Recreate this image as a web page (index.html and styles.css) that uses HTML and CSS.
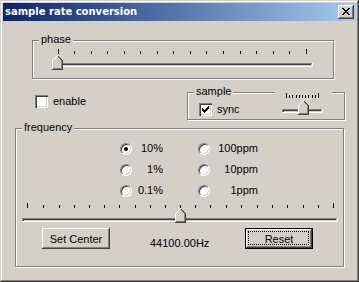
FILE: index.html
```html
<!DOCTYPE html>
<html>
<head>
<meta charset="utf-8">
<link rel="stylesheet" href="styles.css">
</head>
<body>
<div class="window">
  <div class="titlebar">
    <span class="title">sample rate conversion</span>
    <span class="close">
      <svg width="16" height="14" viewBox="0 0 16 14" shape-rendering="crispEdges" fill="#000">
        <rect x="4" y="3" width="2" height="1"/><rect x="10" y="3" width="2" height="1"/>
        <rect x="5" y="4" width="2" height="1"/><rect x="9" y="4" width="2" height="1"/>
        <rect x="6" y="5" width="4" height="1"/>
        <rect x="7" y="6" width="2" height="1"/>
        <rect x="6" y="7" width="4" height="1"/>
        <rect x="5" y="8" width="2" height="1"/><rect x="9" y="8" width="2" height="1"/>
        <rect x="4" y="9" width="2" height="1"/><rect x="10" y="9" width="2" height="1"/>
      </svg>
    </span>
  </div>
  <div class="content">
    <div class="group phase">
      <span class="legend">phase</span>
      <svg class="slider-phase" width="300" height="24" viewBox="0 0 300 24" shape-rendering="crispEdges">
        <defs>
          <g id="thumb">
            <g fill="#d4d0c8">
              <rect x="5" y="1" width="1" height="1"/>
              <rect x="4" y="2" width="3" height="1"/>
              <rect x="3" y="3" width="5" height="1"/>
              <rect x="2" y="4" width="7" height="1"/>
              <rect x="1" y="5" width="9" height="9"/>
            </g>
            <g fill="#fff">
              <rect x="0" y="5" width="1" height="9"/>
              <rect x="1" y="4" width="1" height="1"/>
              <rect x="2" y="3" width="1" height="1"/>
              <rect x="3" y="2" width="1" height="1"/>
              <rect x="4" y="1" width="1" height="1"/>
              <rect x="5" y="0" width="1" height="1"/>
            </g>
            <g fill="#808080">
              <rect x="9" y="5" width="1" height="9"/>
              <rect x="6" y="2" width="1" height="1"/>
              <rect x="7" y="3" width="1" height="1"/>
              <rect x="8" y="4" width="1" height="1"/>
              <rect x="1" y="13" width="8" height="1"/>
            </g>
            <g fill="#404040">
              <rect x="10" y="5" width="1" height="10"/>
              <rect x="6" y="1" width="1" height="1"/>
              <rect x="7" y="2" width="1" height="1"/>
              <rect x="8" y="3" width="1" height="1"/>
              <rect x="9" y="4" width="1" height="1"/>
              <rect x="0" y="14" width="10" height="1"/>
            </g>
          </g>
        </defs>
        <g fill="#000">
          <rect x="25" y="2" width="1" height="5"/>
          <rect x="41" y="4" width="1" height="3"/>
          <rect x="58" y="4" width="1" height="3"/>
          <rect x="74" y="4" width="1" height="3"/>
          <rect x="91" y="4" width="1" height="3"/>
          <rect x="107" y="4" width="1" height="3"/>
          <rect x="124" y="4" width="1" height="3"/>
          <rect x="140" y="4" width="1" height="3"/>
          <rect x="157" y="4" width="1" height="3"/>
          <rect x="173" y="4" width="1" height="3"/>
          <rect x="190" y="4" width="1" height="3"/>
          <rect x="207" y="4" width="1" height="3"/>
          <rect x="223" y="4" width="1" height="3"/>
          <rect x="240" y="4" width="1" height="3"/>
          <rect x="256" y="4" width="1" height="3"/>
          <rect x="273" y="2" width="1" height="5"/>
        </g>
        <rect x="19" y="16" width="260" height="1" fill="#808080"/>
        <rect x="19" y="16" width="1" height="3" fill="#808080"/>
        <rect x="20" y="17" width="258" height="1" fill="#404040"/>
        <rect x="20" y="17" width="1" height="2" fill="#404040"/>
        <rect x="19" y="19" width="261" height="1" fill="#fff"/>
        <rect x="279" y="16" width="1" height="4" fill="#fff"/>
        <use href="#thumb" transform="translate(19,8)"/>
      </svg>
    </div>

    <div class="row2">
      <div class="check enable"><span class="box"></span><span>enable</span></div>
      <div class="group sample">
        <span class="legend">sample</span>
        <div class="check"><span class="box">
          <svg width="13" height="13" viewBox="0 0 13 13" shape-rendering="crispEdges" fill="#000">
            <g transform="translate(3,3)">
              <rect x="6" y="0" width="1" height="1"/>
              <rect x="5" y="1" width="2" height="1"/>
              <rect x="0" y="2" width="1" height="1"/><rect x="4" y="2" width="3" height="1"/>
              <rect x="0" y="3" width="2" height="1"/><rect x="3" y="3" width="3" height="1"/>
              <rect x="0" y="4" width="5" height="1"/>
              <rect x="1" y="5" width="3" height="1"/>
              <rect x="2" y="6" width="1" height="1"/>
            </g>
          </svg>
        </span><span>sync</span></div>
        <svg class="mini-slider" width="58" height="28" viewBox="0 0 58 28" shape-rendering="crispEdges">
          <rect x="0" y="0" width="58" height="28" fill="#d4d0c8"/>
          <g fill="#000">
            <rect x="12" y="5" width="1" height="5"/>
            <rect x="15" y="7" width="1" height="3"/>
            <rect x="18" y="7" width="1" height="3"/>
            <rect x="22" y="7" width="1" height="3"/>
            <rect x="25" y="7" width="1" height="3"/>
            <rect x="28" y="7" width="1" height="3"/>
            <rect x="31" y="7" width="1" height="3"/>
            <rect x="34" y="7" width="1" height="3"/>
            <rect x="38" y="7" width="1" height="3"/>
            <rect x="41" y="7" width="1" height="3"/>
            <rect x="44" y="5" width="1" height="5"/>
          </g>
          <rect x="8" y="21" width="40" height="1" fill="#808080"/>
          <rect x="8" y="21" width="1" height="3" fill="#808080"/>
          <rect x="9" y="22" width="38" height="1" fill="#404040"/>
          <rect x="9" y="22" width="1" height="2" fill="#404040"/>
          <rect x="8" y="24" width="41" height="1" fill="#fff"/>
          <rect x="48" y="21" width="1" height="4" fill="#fff"/>
          <use href="#thumb" transform="translate(24,12)"/>
        </svg>
      </div>
    </div>

    <div class="group freq">
      <span class="legend">frequency</span>
      <div class="radios">
        <div class="radio-item"><span class="radio on"></span><span class="rl">10%</span></div>
        <div class="radio-item"><span class="radio"></span><span class="rl">100ppm</span></div>
        <div class="radio-item"><span class="radio"></span><span class="rl">1%</span></div>
        <div class="radio-item"><span class="radio"></span><span class="rl">10ppm</span></div>
        <div class="radio-item"><span class="radio"></span><span class="rl">0.1%</span></div>
        <div class="radio-item"><span class="radio"></span><span class="rl">1ppm</span></div>
      </div>
      <svg class="main-slider" width="327" height="25" viewBox="0 0 327 25" shape-rendering="crispEdges">
        <g fill="#000">
          <rect x="11" y="2" width="1" height="5"/>
          <rect x="27" y="4" width="1" height="3"/>
          <rect x="43" y="4" width="1" height="3"/>
          <rect x="58" y="4" width="1" height="3"/>
          <rect x="73" y="4" width="1" height="3"/>
          <rect x="88" y="4" width="1" height="3"/>
          <rect x="103" y="4" width="1" height="3"/>
          <rect x="119" y="4" width="1" height="3"/>
          <rect x="134" y="4" width="1" height="3"/>
          <rect x="149" y="4" width="1" height="3"/>
          <rect x="164" y="4" width="1" height="3"/>
          <rect x="179" y="4" width="1" height="3"/>
          <rect x="194" y="4" width="1" height="3"/>
          <rect x="210" y="4" width="1" height="3"/>
          <rect x="225" y="4" width="1" height="3"/>
          <rect x="241" y="4" width="1" height="3"/>
          <rect x="256" y="4" width="1" height="3"/>
          <rect x="271" y="4" width="1" height="3"/>
          <rect x="287" y="4" width="1" height="3"/>
          <rect x="302" y="4" width="1" height="3"/>
          <rect x="317" y="2" width="1" height="5"/>
        </g>
        <rect x="6" y="17" width="315" height="1" fill="#808080"/>
        <rect x="6" y="17" width="1" height="3" fill="#808080"/>
        <rect x="7" y="18" width="313" height="1" fill="#404040"/>
        <rect x="7" y="18" width="1" height="2" fill="#404040"/>
        <rect x="6" y="20" width="316" height="1" fill="#fff"/>
        <rect x="321" y="17" width="1" height="4" fill="#fff"/>
        <use href="#thumb" transform="translate(159,7)"/>
      </svg>
      <div class="buttons">
        <div class="btn">Set Center</div>
        <div class="hz">44100.00Hz</div>
        <div class="btn default">Reset</div>
      </div>
    </div>
  </div>
</div>
</body>
</html>
```

FILE: styles.css
```css
* { box-sizing: border-box; }
html, body { margin: 0; padding: 0; }
body {
  width: 359px;
  height: 282px;
  overflow: hidden;
  background: #d4d0c8;
  font-family: "Liberation Sans", Arial, sans-serif;
  font-size: 11px;
  color: #000;
}
.window {
  width: 359px;
  height: 282px;
  padding: 3px;
  background: #d4d0c8;
  box-shadow: inset -1px -1px 0 #404040, inset 1px 1px 0 #d4d0c8, inset -2px -2px 0 #808080, inset 2px 2px 0 #fff;
}
.titlebar {
  height: 18px;
  display: flex;
  align-items: center;
  justify-content: space-between;
  padding: 0 2px;
  background: linear-gradient(to right, #0a246a, #a6caf0);
}
.title {
  font-family: "DejaVu Sans", sans-serif;
  font-weight: bold;
  font-size: 10px;
  line-height: 18px;
  color: #fff;
}
.close {
  display: block;
  width: 16px;
  height: 14px;
  background: #d4d0c8;
  box-shadow: inset -1px -1px 0 #404040, inset 1px 1px 0 #fff, inset -2px -2px 0 #808080;
}
.close svg { display: block; }
.content { display: flex; flex-direction: column; }
.group {
  position: relative;
  border: 1px solid #808080;
  box-shadow: inset 1px 1px 0 #fff, 1px 1px 0 #fff;
}
.legend {
  position: absolute;
  top: -8px;
  left: 6px;
  padding: 0 2px;
  background: #d4d0c8;
  line-height: 13px;
  white-space: nowrap;
}
.phase {
  margin: 19px 0 0 29px;
  width: 302px;
  height: 39px;
  padding-top: 6px;
}
.phase svg, .main-slider { display: block; }
.row2 {
  display: flex;
  align-items: flex-start;
  margin-top: 13px;
  height: 28px;
}
.check {
  display: flex;
  align-items: center;
  gap: 5px;
  line-height: 13px;
}
.box {
  display: block;
  width: 13px;
  height: 13px;
  flex: none;
  background: #fff;
  box-shadow: inset 1px 1px 0 #808080, inset 2px 2px 0 #404040, inset -1px -1px 0 #fff, inset -2px -2px 0 #d4d0c8;
}
.box svg { display: block; }
.enable { margin: 3px 0 0 32px; }
.sample {
  margin-left: auto;
  margin-right: 11px;
  width: 158px;
  height: 28px;
  padding: 10px 0 0 11px;
}
.mini-slider {
  position: absolute;
  left: 86px;
  top: -5px;
  display: block;
}
.freq {
  margin: 8px 0 0 12px;
  width: 329px;
  height: 139px;
  padding-top: 9px;
}
.radios {
  display: grid;
  grid-template-columns: 43px 60px;
  column-gap: 35px;
  grid-auto-rows: 21px;
  margin-left: 104px;
}
.radio-item { display: flex; align-items: center; }
.radio {
  position: relative;
  display: block;
  width: 12px;
  height: 12px;
  flex: none;
  border-radius: 50%;
  background: #fff;
  border: 1px solid;
  border-color: #808080 #fff #fff #808080;
  box-shadow: inset 1px 1px 0 #404040, inset -1px -1px 0 #d4d0c8;
}
.radio.on::after {
  content: "";
  position: absolute;
  left: 3px;
  top: 3px;
  width: 4px;
  height: 4px;
  border-radius: 50%;
  background: #000;
}
.rl { flex: 1; text-align: right; line-height: 13px; }
.buttons {
  display: flex;
  align-items: flex-start;
  margin-top: 2px;
  padding-left: 26px;
}
.btn {
  position: relative;
  width: 68px;
  height: 21px;
  display: flex;
  align-items: center;
  justify-content: center;
  background: #d4d0c8;
  box-shadow: inset -1px -1px 0 #404040, inset 1px 1px 0 #fff, inset -2px -2px 0 #808080;
}
.btn.default { border: 1px solid #000; }
.btn.default::after {
  content: "";
  position: absolute;
  inset: 2px 3px 3px 2px;
  border: 1px dotted #000;
}
.hz {
  width: 95px;
  margin-left: 40px;
  padding-top: 9px;
  line-height: 13px;
}
```
